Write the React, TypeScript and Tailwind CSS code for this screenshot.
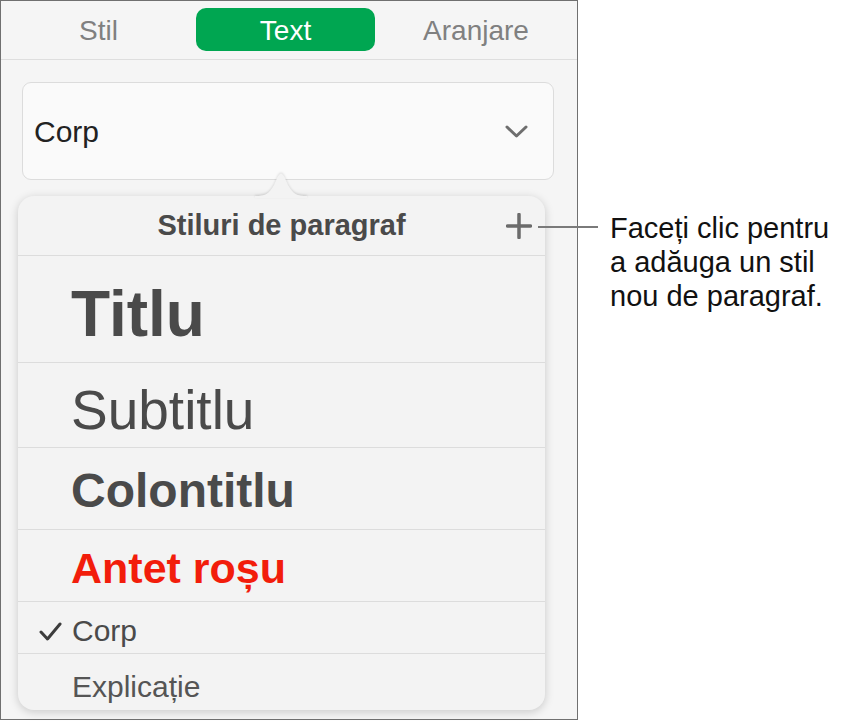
export default function App() {
  return (
    <div className="relative flex w-[844px] h-[721px] bg-white font-['Liberation_Sans',Arial,sans-serif]">
      {/* Sidebar panel */}
      <div className="flex flex-col w-[578px] h-[720px] border border-[#707070] bg-[#f5f5f5]">
        {/* Tabs */}
        <div className="flex items-start h-[59px] pt-[7px] border-b border-[#dedede]">
          <div className="w-[195px] h-[43px] pt-[2px] flex items-center justify-center text-[28px] text-[#808080]">Stil</div>
          <div className="w-[179px] h-[43px] pt-[2px] flex items-center justify-center rounded-[10px] bg-[#00a651] text-[28px] text-white">
            Text
          </div>
          <div className="flex-1 h-[43px] pt-[2px] flex items-center justify-center text-[28px] text-[#808080]">Aranjare</div>
        </div>

        {/* Style selector */}
        <div className="mt-[22px] ml-[21px] w-[532px] h-[98px] flex items-center justify-between pl-[11px] pr-[25px] rounded-[9px] border border-[#dcdcdc] bg-[#fafafa]">
          <span className="text-[30px] text-[#222]">Corp</span>
          <svg width="23" height="13" viewBox="0 0 23 13" fill="none">
            <path d="M2 2 L11.5 11 L21 2" stroke="#6e6e6e" strokeWidth="3" strokeLinecap="round" strokeLinejoin="round" />
          </svg>
        </div>

        {/* Popover */}
        <div className="relative mt-[16px] ml-[17px] w-[527px] flex flex-col rounded-[16px] bg-[#f3f3f3] shadow-[0_2px_10px_rgba(0,0,0,0.18)]">
          <svg
            className="absolute left-[237px] -top-[26px] drop-shadow-[0_-1px_1px_rgba(0,0,0,0.12)]"
            width="52"
            height="28"
            viewBox="0 0 52 28"
          >
            <path d="M0 28 L0 26 C10 26 14 24 19 15 L22.5 7 Q26 0 29.5 7 L33 15 C38 24 42 26 52 26 L52 28 Z" fill="#f3f3f3" />
          </svg>

          <div className="relative h-[60px] flex items-center justify-center border-b border-[#dcdcdc]">
            <span className="text-[29px] font-bold text-[#4a4a4a]">Stiluri de paragraf</span>
            <svg className="absolute right-[13px] top-[17px]" width="26" height="26" viewBox="0 0 26 26">
              <path d="M13 1.5 V24.5 M1.5 13 H24.5" stroke="#6b6b6b" strokeWidth="3.5" strokeLinecap="round" />
            </svg>
          </div>

          <div className="h-[107px] flex items-center pl-[53px] pt-[10px] border-b border-[#dcdcdc]">
            <span className="text-[64px] leading-none font-bold text-[#4a4a4a]">Titlu</span>
          </div>
          <div className="h-[85px] flex items-center pl-[53px] pt-[10px] border-b border-[#dcdcdc]">
            <span className="text-[55px] leading-none text-[#4a4a4a]">Subtitlu</span>
          </div>
          <div className="h-[82px] flex items-center pl-[53px] pt-[5px] border-b border-[#dcdcdc]">
            <span className="text-[48px] leading-none font-bold text-[#4a4a4a]">Colontitlu</span>
          </div>
          <div className="h-[72px] flex items-center pl-[53px] pt-[6px] border-b border-[#dcdcdc]">
            <span className="text-[43px] leading-none font-bold text-[#f21d0b]">Antet roșu</span>
          </div>
          <div className="h-[52px] flex items-center pl-[21px] pt-[7px] border-b border-[#dcdcdc]">
            <svg width="23" height="19" viewBox="0 0 23 19" fill="none">
              <path d="M2 10 L8.5 17 L21 2" stroke="#3c3c3c" strokeWidth="3" strokeLinecap="round" strokeLinejoin="round" />
            </svg>
            <span className="ml-[10px] text-[30px] leading-none text-[#4a4a4a]">Corp</span>
          </div>
          <div className="h-[56px] flex items-center pl-[54px] pt-[9px]">
            <span className="text-[30px] leading-none text-[#555]">Explicație</span>
          </div>
        </div>
      </div>

      {/* Callout */}
      <div className="absolute left-[538px] top-[226px] w-[60px] h-[1.5px] bg-[#7a7a7a]" />
      <div className="pl-[32px] pt-[211px] text-[29px] leading-[34px] text-[#111]">
        <div>Faceți clic pentru</div>
        <div>a adăuga un stil</div>
        <div>nou de paragraf.</div>
      </div>
    </div>
  );
}
